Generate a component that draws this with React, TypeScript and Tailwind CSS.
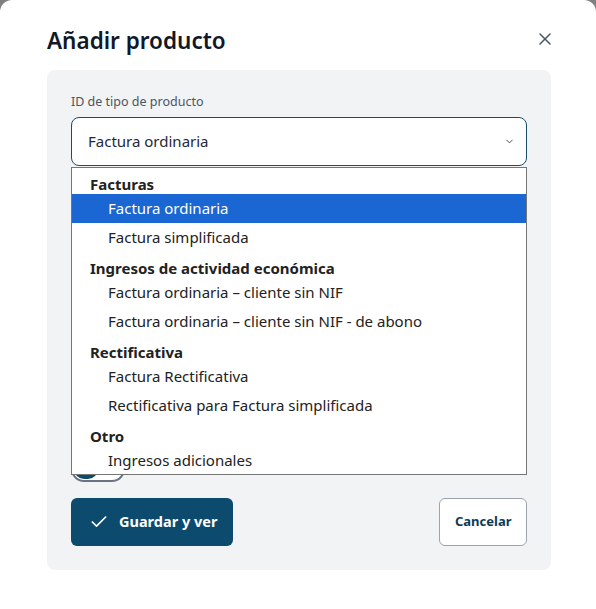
import { Check, X, ChevronDown } from 'lucide-react';

const GROUPS = [
  { label: 'Facturas', items: ['Factura ordinaria', 'Factura simplificada'] },
  {
    label: 'Ingresos de actividad económica',
    items: ['Factura ordinaria – cliente sin NIF', 'Factura ordinaria – cliente sin NIF - de abono'],
  },
  { label: 'Rectificativa', items: ['Factura Rectificativa', 'Rectificativa para Factura simplificada'] },
  { label: 'Otro', items: ['Ingresos adicionales'] },
];

const SELECTED = 'Factura ordinaria';

export default function App() {
  return (
    <div className="h-[609px] w-[596px] overflow-hidden bg-[#808080] font-['Noto_Sans',sans-serif]">
      <div className="h-full rounded-t-xl bg-white pl-[47px] pr-[45px] pt-[26px]">
        {/* Header */}
        <div className="flex items-center justify-between">
          <h2 className="text-[22.5px] font-semibold leading-[30px] text-[#111827]">Añadir producto</h2>
          <button className="mr-[-4px] mt-[-4px] text-[#4b5563]">
            <X size={20} strokeWidth={1.75} />
          </button>
        </div>

        {/* Panel */}
        <div className="mt-[14px] h-[500px] rounded-lg bg-[#f2f3f5] px-6 pt-[23px]">
          <label className="block text-[12.5px] leading-[18px] text-[#4b5563]">ID de tipo de producto</label>
          <div className="relative mt-[6px]">
            <div className="flex h-[49px] items-center justify-between rounded-lg border border-[#1b4d6b] bg-white pl-4 pr-[11px]">
              <span className="text-[15px] text-[#1f2937]">Factura ordinaria</span>
              <ChevronDown size={11} strokeWidth={2} className="text-[#374151]" />
            </div>

            {/* Toggle hidden behind the open list */}
            <div className="mt-[290px] h-[26px] w-[54px] rounded-full border-2 border-[#6b7280] bg-white p-[1px]">
              <div className="h-[20px] w-[24px] rounded-full bg-[#0c4a6e]" />
            </div>

            {/* Native-looking dropdown list */}
            <div className="absolute left-0 right-0 top-[50px] h-[308px] overflow-hidden border border-[#767676] bg-white text-[15px] text-[#222]">
              {GROUPS.map((g) => (
                <div key={g.label}>
                  <div className="flex h-[26px] items-end pl-[18px] font-bold leading-[20px]">{g.label}</div>
                  {g.items.map((it) => (
                    <div
                      key={it}
                      className={
                        it === SELECTED
                          ? 'flex h-[29px] items-center bg-[#1a66d2] pl-9 text-white'
                          : 'flex h-[29px] items-center pl-9'
                      }
                    >
                      {it}
                    </div>
                  ))}
                </div>
              ))}
            </div>
          </div>

          {/* Actions */}
          <div className="mt-[16px] flex items-center justify-between">
            <button className="flex h-12 items-center gap-[10px] rounded-md bg-[#0c4a6e] pl-[18px] pr-[16px] text-[14.5px] font-bold text-white">
              <Check size={20} strokeWidth={2} />
              Guardar y ver
            </button>
            <button className="h-12 rounded-md border border-[#9ca3af] bg-white px-[14.5px] text-[13px] font-bold text-[#0c3a57]">
              Cancelar
            </button>
          </div>
        </div>
      </div>
    </div>
  );
}
